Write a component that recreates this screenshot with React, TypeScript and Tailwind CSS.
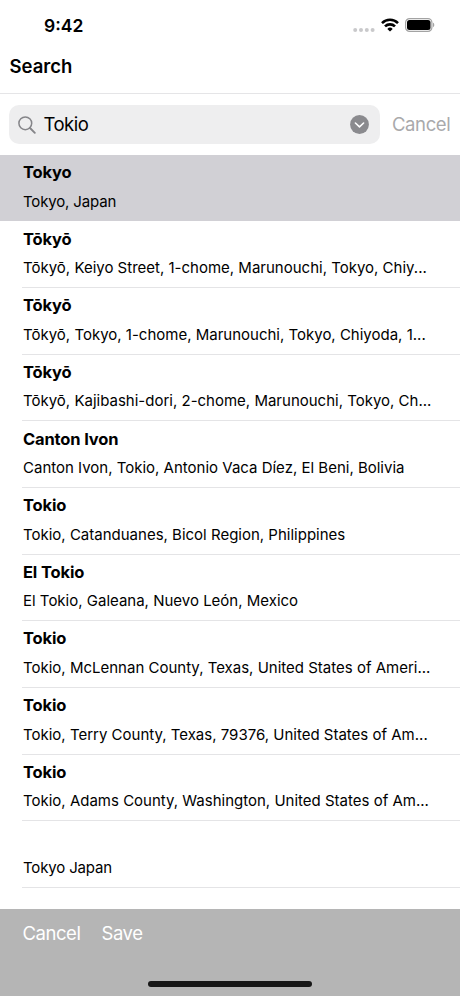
import clsx from 'clsx';

interface Place {
  name: string;
  address: string;
  selected?: boolean;
}

const places: Place[] = [
  { name: 'Tokyo', address: 'Tokyo, Japan', selected: true },
  { name: 'Tōkyō', address: 'Tōkyō, Keiyo Street, 1-chome, Marunouchi, Tokyo, Chiy...' },
  { name: 'Tōkyō', address: 'Tōkyō, Tokyo, 1-chome, Marunouchi, Tokyo, Chiyoda, 1...' },
  { name: 'Tōkyō', address: 'Tōkyō, Kajibashi-dori, 2-chome, Marunouchi, Tokyo, Ch...' },
  { name: 'Canton Ivon', address: 'Canton Ivon, Tokio, Antonio Vaca Díez, El Beni, Bolivia' },
  { name: 'Tokio', address: 'Tokio, Catanduanes, Bicol Region, Philippines' },
  { name: 'El Tokio', address: 'El Tokio, Galeana, Nuevo León, Mexico' },
  { name: 'Tokio', address: 'Tokio, McLennan County, Texas, United States of Ameri...' },
  { name: 'Tokio', address: 'Tokio, Terry County, Texas, 79376, United States of Am...' },
  { name: 'Tokio', address: 'Tokio, Adams County, Washington, United States of Am...' },
  { name: '', address: 'Tokyo Japan' },
];

function StatusBar() {
  return (
    <div className="flex h-[50px] items-center justify-between pl-[44px] pr-[24px]">
      <span className="mt-px text-[17.5px] font-semibold leading-[20px]">9:42</span>
      <div className="flex items-center">
        <svg width="22" height="6" viewBox="0 0 22 6" className="mt-[9px]" fill="#c9c9cb">
          <circle cx="2.2" cy="3" r="2" />
          <circle cx="8" cy="3" r="2" />
          <circle cx="13.8" cy="3" r="2" />
          <circle cx="19.6" cy="3" r="2" />
        </svg>
        <svg width="18" height="14" viewBox="0 0 18 14" className="ml-[6px]" fill="none" stroke="#000" strokeWidth="2.6">
          <path d="M1 5.1A11.4 11.4 0 0 1 17 5.1" />
          <path d="M4 8.4A7.1 7.1 0 0 1 14 8.4" />
          <path d="M9 13.6 6.3 10.9A3.9 3.9 0 0 1 11.7 10.9Z" fill="#000" stroke="none" />
        </svg>
        <svg width="31" height="14" viewBox="0 0 31 14" className="ml-[6px]">
          <rect x="0.6" y="0.6" width="26.3" height="12.8" rx="4" fill="none" stroke="#a3a3a3" strokeWidth="1.2" />
          <rect x="2" y="2" width="23.5" height="10" rx="2.5" fill="#000" />
          <path d="M28 4.8c1.7.5 1.7 3.9 0 4.4Z" fill="#a3a3a3" />
        </svg>
      </div>
    </div>
  );
}

function SearchBar() {
  return (
    <div className="flex h-[61px] items-start pl-[9px] pt-[11px]">
      <div className="flex h-[39px] w-[371px] items-center rounded-[10px] bg-[#eeeeef] pl-[9px] pr-[11px]">
        <svg width="18" height="18" viewBox="0 0 18 18" fill="none" stroke="#858589" strokeLinecap="round">
          <circle cx="7.3" cy="7.3" r="6.4" strokeWidth="1.5" />
          <path d="M12 12 16.8 16.8" strokeWidth="1.9" />
        </svg>
        <span className="-mt-px ml-[7.5px] flex-1 text-[18.5px] leading-[22px] tracking-[-0.5px]">Tokio</span>
        <svg width="19" height="20" viewBox="0.5 0 19 20" fill="none">
          <circle cx="10" cy="9.5" r="9.4" fill="#8a8a8e" />
          <path d="M5.9 8 10 11.8 14.1 8" stroke="#fff" strokeWidth="1.6" strokeLinecap="round" strokeLinejoin="round" />
        </svg>
      </div>
      <button className="ml-[12px] mt-[8px] text-[18.5px] leading-[22px] tracking-[-0.4px] text-[#a9a9ab]">Cancel</button>
    </div>
  );
}

function PlaceRow({ name, address, selected }: Place) {
  return (
    <li className={clsx('pl-[22px]', selected ? 'h-[66.4px] bg-[#d1d0d5]' : 'h-[66.65px]')}>
      <div
        className={clsx(
          'h-full whitespace-nowrap border-b pl-px pt-[7.2px]',
          selected ? 'border-[#d1d0d5]' : 'border-[#e4e4e6]',
        )}
      >
        <p className="h-[20px] text-[16.5px] font-bold leading-[20px] tracking-[-0.15px]">{name}</p>
        <p className={clsx('mt-[10.6px] text-[15px] leading-[18px]', address.length < 15 && 'tracking-[-0.15px]')}>
          {address}
        </p>
      </div>
    </li>
  );
}

export default function App() {
  return (
    <div className="flex h-[996px] w-[460px] flex-col overflow-hidden bg-white font-['Inter',sans-serif] text-black">
      <StatusBar />
      <header className="h-[44px] border-b border-[#e5e5e7] pl-[9.5px] pt-[5px]">
        <h1 className="text-[18.5px] font-semibold leading-[22px]">Search</h1>
      </header>
      <SearchBar />
      <ul className="flex-1">
        {places.map((place, i) => (
          <PlaceRow key={i} {...place} />
        ))}
      </ul>
      <footer className="flex h-[87px] shrink-0 flex-col justify-between bg-[#b5b5b5] pb-[9px] pt-[13px]">
        <div className="flex gap-[21px] pl-[22.5px] text-[18.5px] leading-[22px] tracking-[-0.45px] text-white">
          <button>Cancel</button>
          <button>Save</button>
        </div>
        <div className="h-[6px] w-[164px] self-center rounded-full bg-[#171717]" />
      </footer>
    </div>
  );
}
